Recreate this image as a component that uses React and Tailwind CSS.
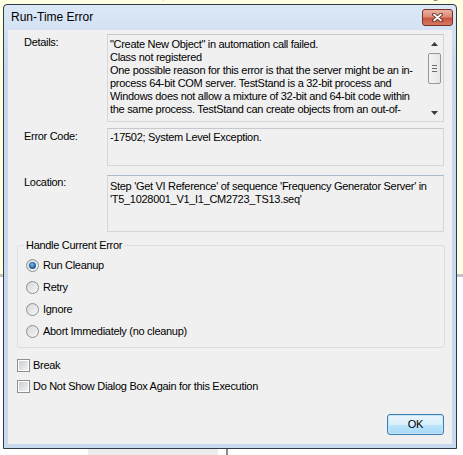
import React from "react";

function Radio({ checked, label }) {
  return (
    <div className="flex items-center h-[13px] gap-[4px]">
      <div className="w-[13px] h-[13px] rounded-full border border-[#8e8f8f] bg-[linear-gradient(135deg,#d4d6d9,#f8f8f8)] flex items-center justify-center shrink-0">
        {checked && (
          <div className="w-[7px] h-[7px] rounded-full bg-[radial-gradient(circle_at_45%_40%,#8fc3ee_0%,#2e6db0_45%,#0d3d73_100%)]" />
        )}
      </div>
      <span className="leading-[13px] whitespace-nowrap">{label}</span>
    </div>
  );
}

function Check({ label }) {
  return (
    <div className="flex items-center h-[13px] gap-[3px]">
      <div className="w-[13px] h-[13px] border border-[#8e8f8f] bg-white p-px shrink-0">
        <div className="w-full h-full bg-[linear-gradient(135deg,#c9cdd3,#f4f4f4)]" />
      </div>
      <span className="leading-[13px] whitespace-nowrap">{label}</span>
    </div>
  );
}

function Arrow({ up }) {
  return (
    <svg width="7" height="4" viewBox="0 0 7 4">
      {up ? (
        <polygon points="0,4 7,4 3.5,0" fill="#3b3b3b" />
      ) : (
        <polygon points="0,0 7,0 3.5,4" fill="#3b3b3b" />
      )}
    </svg>
  );
}

export default function App() {
  const details = [
    "\"Create New Object\" in automation call failed.",
    "Class not registered",
    "One possible reason for this error is that the server might be an in-",
    "process 64-bit COM server. TestStand is a 32-bit process and",
    "Windows does not allow a mixture of 32-bit and 64-bit code within",
    "the same process. TestStand can create objects from an out-of-",
  ];
  return (
    <div
      className="relative w-[463px] h-[455px] overflow-hidden bg-white text-black text-[11px] tracking-[-0.3px]"
      style={{ fontFamily: '"Liberation Sans", Arial, sans-serif' }}
    >
      {/* background tooltip window */}
      <div className="absolute left-0 top-0 w-[463px] h-[277px] bg-[#ffffe1] border-b-[3px] border-[#c4c4c4] overflow-hidden">
        <div className="flex text-[#6f6f5a] text-[11px] leading-[13px] -mt-[11px] whitespace-nowrap">
          <span className="ml-[100px]">Action: CallVI, Instrument Pr</span>
          <span className="ml-[85px]">Result Pos</span>
          <span className="ml-[60px]">ing</span>
        </div>
      </div>
      <div className="absolute left-[88px] top-[449px] w-[130px] h-[6px] bg-[#ececec]" />
      <div className="absolute left-[226px] top-[449px] w-[2px] h-[6px] bg-[#8a8a8a]" />

      {/* dialog */}
      <div className="absolute left-[3px] top-[4px] w-[454px] h-[445px] border border-[#2e3a48] rounded-t-[4px] bg-[linear-gradient(#dce8f6,#c6d8ee_60px,#c9daef)] flex flex-col">
        {/* title bar */}
        <div className="h-[25px] flex items-start shrink-0">
          <div className="pl-[7px] pt-[5px] text-[12px] tracking-normal leading-[15px] text-black">
            Run-Time Error
          </div>
          <div className="ml-auto mr-[3px] mt-[4px] w-[31px] h-[17px] rounded-[3px] border border-[#7a2e24] bg-[linear-gradient(#eab0a2,#dc8b78_45%,#c85440_55%,#d67a62)] flex items-center justify-center">
            <svg width="11" height="9" viewBox="0 0 11 9">
              <path d="M2 1.5 L9 7.5 M9 1.5 L2 7.5" stroke="#5a2119" strokeWidth="3.6" strokeLinecap="round" />
              <path d="M2 1.5 L9 7.5 M9 1.5 L2 7.5" stroke="#ffffff" strokeWidth="1.8" strokeLinecap="round" />
            </svg>
          </div>
        </div>

        {/* content */}
        <div className="mx-[4px] h-[414px] bg-[#f0f0f0] flex flex-col shrink-0">
          {/* Details */}
          <div className="flex mt-[4px]">
            <div className="w-[99px] pl-[16px] pt-[2px] leading-[13px]">Details:</div>
            <div className="w-[337px] h-[88px] border border-[#d3d7dc] border-t-[#c4c9cf] bg-[#f0f0f0] flex">
              <div className="flex-1 pl-[2px] pt-[3px] leading-[13px] overflow-hidden whitespace-nowrap">
                {details.map((l, i) => (
                  <div key={i}>{l}</div>
                ))}
              </div>
              <div className="w-[17px] flex flex-col items-center">
                <div className="h-[17px] flex items-center justify-center w-full">
                  <Arrow up />
                </div>
                <div className="flex-1 w-full flex flex-col items-center">
                  <div className="mt-px w-[13px] h-[31px] rounded-[2px] border border-[#979797] bg-[linear-gradient(90deg,#f4f4f4,#e6e6e6)] flex flex-col items-center justify-center gap-[2px]">
                    <div className="w-[5px] h-px bg-[#6f6f6f]" />
                    <div className="w-[5px] h-px bg-[#6f6f6f]" />
                    <div className="w-[5px] h-px bg-[#6f6f6f]" />
                  </div>
                </div>
                <div className="h-[17px] flex items-center justify-center w-full">
                  <Arrow />
                </div>
              </div>
            </div>
          </div>

          {/* Error Code */}
          <div className="flex mt-[6px]">
            <div className="w-[99px] pl-[16px] pt-[2px] leading-[13px]">Error Code:</div>
            <div className="w-[337px] h-[38px] border border-[#d3d7dc] border-t-[#c4c9cf] bg-[#f0f0f0] pl-[2px] pt-[2px] leading-[13px] whitespace-nowrap">
              -17502; System Level Exception.
            </div>
          </div>

          {/* Location */}
          <div className="flex mt-[9px]">
            <div className="w-[99px] pl-[16px] pt-[1px] leading-[13px]">Location:</div>
            <div className="w-[337px] h-[57px] border border-[#d3d7dc] border-t-[#a9bccf] bg-[#f0f0f0] pl-[2px] pt-[4px] leading-[13px] whitespace-nowrap">
              <div>Step 'Get VI Reference' of sequence 'Frequency Generator Server' in</div>
              <div>'T5_1028001_V1_I1_CM2723_TS13.seq'</div>
            </div>
          </div>

          {/* Group */}
          <div className="relative mt-[13px] ml-[9px] w-[428px] h-[103px] border border-[#d5dfe5] rounded-[3px] flex flex-col gap-[9px] pt-[13px] pl-[8px]">
            <span className="absolute left-[6px] -top-[7px] px-[2px] bg-[#f0f0f0] leading-[13px] whitespace-nowrap">
              Handle Current Error
            </span>
            <Radio checked label="Run Cleanup" />
            <Radio label="Retry" />
            <Radio label="Ignore" />
            <Radio label="Abort Immediately (no cleanup)" />
          </div>

          <div className="mt-[11px] ml-[9px] flex flex-col gap-[8px]">
            <Check label="Break" />
            <Check label="Do Not Show Dialog Box Again for this Execution" />
          </div>

          <div className="mt-[21px] self-end mr-[8px] w-[57px] h-[21px] rounded-[3px] border border-[#3c7fb1] bg-[linear-gradient(#eaf6fd,#d9f0fc_50%,#bee6fd_50%,#a7d9f5)] flex items-center justify-center leading-[13px] shadow-[inset_0_0_0_1px_#c6e6f8]">
            OK
          </div>
        </div>
      </div>
    </div>
  );
}
